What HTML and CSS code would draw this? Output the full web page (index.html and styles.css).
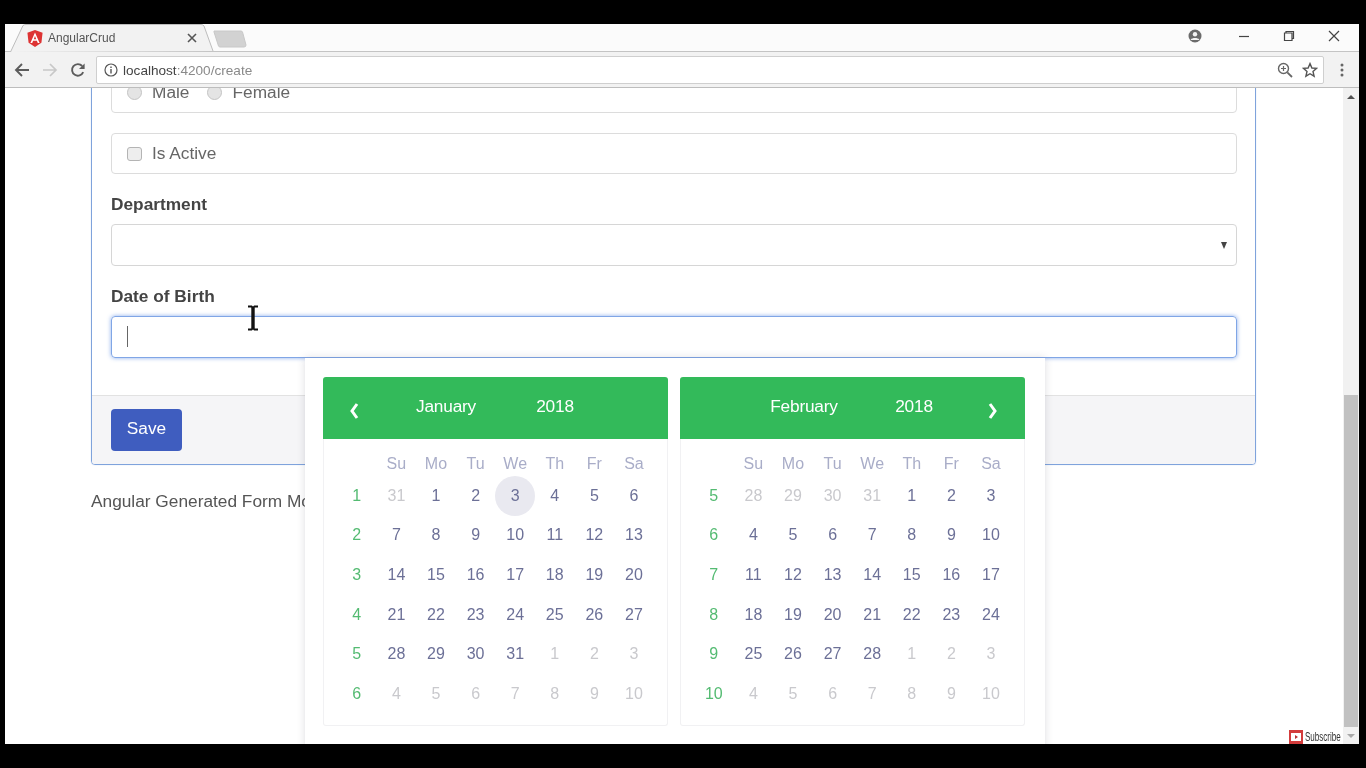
FILE: index.html
```html
<!DOCTYPE html>
<html lang="en">
<head>
  <meta charset="UTF-8" />
  <title>AngularCrud</title>
  <link rel="stylesheet" href="styles.css">
</head>
<body>
  <div class="screen">
    <div class="tabstrip">
      <div class="tab">
        <svg class="tab-shape" width="204" height="28" viewBox="0 0 204 28"><path d="M0.5 28 L13 1.5 Q14 0.5 16 0.5 L191 0.5 Q193 0.5 194 2 L203 27" fill="#f2f2f2" stroke="#bdbdbd"/></svg>
        <svg class="tab-logo" width="16" height="17" viewBox="0 0 16 17"><path d="M8 0 L15.6 2.7 L14.4 12.7 L8 17 L1.6 12.7 L0.4 2.7 Z" fill="#dd3333"/><path d="M8 2.5 L3.4 13 H5.2 L6.1 10.7 H9.9 L10.8 13 H12.6 Z M6.8 9.2 L8 6 L9.2 9.2 Z" fill="#fff" fill-rule="evenodd"/></svg>
        <span class="tab-title">AngularCrud</span>
        <svg class="tab-close" width="10" height="10" viewBox="0 0 10 10"><path d="M1 1 L9 9 M9 1 L1 9" stroke="#555" stroke-width="1.6"/></svg>
      </div>
      <svg class="newtab" width="34" height="18" viewBox="0 0 34 18"><path d="M1 1 H28 Q29 1 29.5 2 L33 15 Q33 17 31 17 H7 Q6 17 5.5 16 L1 2 Z" fill="#d2d2d2" stroke="#c8c8c8" stroke-linejoin="round"/></svg>
      <div class="win-btns">
        <svg class="win-user" width="14" height="14" viewBox="0 0 14 14"><circle cx="7" cy="7" r="6.5" fill="#6b6b6b"/><circle cx="7" cy="5.2" r="2.2" fill="#f4f4f4"/><path d="M2.8 10.6 C4 8.6 10 8.6 11.2 10.6 L11.2 11 H2.8 Z" fill="#f4f4f4"/></svg>
        <span class="win-btn"><svg width="12" height="12" viewBox="0 0 12 12"><path d="M1 6.5 H11" stroke="#444" stroke-width="1.2"/></svg></span>
        <span class="win-btn"><svg width="12" height="12" viewBox="0 0 12 12"><path d="M3 3 V1.5 H10.5 V8.5 H9 M1.5 3 H9 V10.5 H1.5 Z" fill="none" stroke="#444" stroke-width="1.2"/></svg></span>
        <span class="win-btn"><svg width="12" height="12" viewBox="0 0 12 12"><path d="M1 1 L11 11 M11 1 L1 11" stroke="#444" stroke-width="1.2"/></svg></span>
      </div>
    </div>

    <div class="toolbar">
      <span class="tool"><svg width="16" height="16" viewBox="0 0 16 16"><path d="M15 8 H2 M8 2 L2 8 L8 14" fill="none" stroke="#5c5c5c" stroke-width="1.9"/></svg></span>
      <span class="tool"><svg width="16" height="16" viewBox="0 0 16 16"><path d="M1 8 H14 M8 2 L14 8 L8 14" fill="none" stroke="#c8c8c8" stroke-width="1.7"/></svg></span>
      <span class="tool"><svg width="16" height="16" viewBox="0 0 16 16"><path d="M13.2 10.2 A5.8 5.8 0 1 1 12.2 4" fill="none" stroke="#5c5c5c" stroke-width="1.9"/><path d="M14.6 1.4 V7 H9 Z" fill="#5c5c5c"/></svg></span>
      <div class="address">
        <svg class="addr-info" width="14" height="14" viewBox="0 0 14 14"><circle cx="7" cy="7" r="6" fill="none" stroke="#555" stroke-width="1.2"/><path d="M7 6 V10.5 M7 3.4 V5" stroke="#555" stroke-width="1.4"/></svg>
        <span class="url"><span class="url-host">localhost</span>:4200/create</span>
        <svg class="addr-zoom" width="16" height="16" viewBox="0 0 16 16"><circle cx="6.5" cy="6.5" r="5" fill="none" stroke="#666" stroke-width="1.4"/><path d="M10.3 10.3 L15 15" stroke="#666" stroke-width="1.8"/><path d="M4 6.5 H9 M6.5 4 V9" stroke="#666" stroke-width="1.2"/></svg>
        <svg class="addr-star" width="16" height="16" viewBox="0 0 16 16"><path d="M8 1.6 L9.9 6 L14.6 6.4 L11 9.5 L12.1 14.2 L8 11.7 L3.9 14.2 L5 9.5 L1.4 6.4 L6.1 6 Z" fill="none" stroke="#555" stroke-width="1.4"/></svg>
      </div>
      <svg class="kebab" width="4" height="14" viewBox="0 0 4 14"><circle cx="2" cy="2" r="1.5" fill="#666"/><circle cx="2" cy="7" r="1.5" fill="#666"/><circle cx="2" cy="12" r="1.5" fill="#666"/></svg>
    </div>

    <div class="viewport">
      <div class="page">
        <div class="panel">
          <div class="panel-body">
            <div class="box">
              <span class="radio"></span><span class="opt">Male</span>
              <span class="radio"></span><span class="opt">Female</span>
            </div>
            <div class="box">
              <span class="check"></span><span class="opt">Is Active</span>
            </div>
            <label class="field-label">Department</label>
            <div class="select"><span class="caret"></span></div>
            <label class="field-label">Date of Birth</label>
            <div class="input focused"><span class="text-cursor"></span></div>
          </div>
          <div class="panel-footer">
            <button class="btn-save">Save</button>
          </div>
        </div>
        <p class="model-text">Angular Generated Form Model</p>

        <div class="datepicker">
          <div class="month">
            <div class="month-head">
              <svg class="chev" width="10" height="16" viewBox="0 0 10 16"><path d="M8 1 L3 8 L8 15" fill="none" stroke="#fff" stroke-width="3"/></svg>
              <span>January</span><span>2018</span><span></span>
            </div>
            <div class="cal">
              <span></span><span class="wd">Su</span><span class="wd">Mo</span><span class="wd">Tu</span><span class="wd">We</span><span class="wd">Th</span><span class="wd">Fr</span><span class="wd">Sa</span>
              <span class="wk">1</span><span class="off">31</span><span>1</span><span>2</span><span class="today">3</span><span>4</span><span>5</span><span>6</span>
              <span class="wk">2</span><span>7</span><span>8</span><span>9</span><span>10</span><span>11</span><span>12</span><span>13</span>
              <span class="wk">3</span><span>14</span><span>15</span><span>16</span><span>17</span><span>18</span><span>19</span><span>20</span>
              <span class="wk">4</span><span>21</span><span>22</span><span>23</span><span>24</span><span>25</span><span>26</span><span>27</span>
              <span class="wk">5</span><span>28</span><span>29</span><span>30</span><span>31</span><span class="off">1</span><span class="off">2</span><span class="off">3</span>
              <span class="wk">6</span><span class="off">4</span><span class="off">5</span><span class="off">6</span><span class="off">7</span><span class="off">8</span><span class="off">9</span><span class="off">10</span>
            </div>
          </div>
          <div class="month">
            <div class="month-head month-head-right">
              <span></span><span>February</span><span>2018</span>
              <svg class="chev" width="10" height="16" viewBox="0 0 10 16"><path d="M2 1 L7 8 L2 15" fill="none" stroke="#fff" stroke-width="3"/></svg>
            </div>
            <div class="cal">
              <span></span><span class="wd">Su</span><span class="wd">Mo</span><span class="wd">Tu</span><span class="wd">We</span><span class="wd">Th</span><span class="wd">Fr</span><span class="wd">Sa</span>
              <span class="wk">5</span><span class="off">28</span><span class="off">29</span><span class="off">30</span><span class="off">31</span><span>1</span><span>2</span><span>3</span>
              <span class="wk">6</span><span>4</span><span>5</span><span>6</span><span>7</span><span>8</span><span>9</span><span>10</span>
              <span class="wk">7</span><span>11</span><span>12</span><span>13</span><span>14</span><span>15</span><span>16</span><span>17</span>
              <span class="wk">8</span><span>18</span><span>19</span><span>20</span><span>21</span><span>22</span><span>23</span><span>24</span>
              <span class="wk">9</span><span>25</span><span>26</span><span>27</span><span>28</span><span class="off">1</span><span class="off">2</span><span class="off">3</span>
              <span class="wk">10</span><span class="off">4</span><span class="off">5</span><span class="off">6</span><span class="off">7</span><span class="off">8</span><span class="off">9</span><span class="off">10</span>
            </div>
          </div>
        </div>

        <svg class="ibeam" width="12" height="26" viewBox="0 0 12 26"><path d="M1 1.5 H4.5 L6 3 L7.5 1.5 H11 M1 24.5 H4.5 L6 23 L7.5 24.5 H11" fill="none" stroke="#111" stroke-width="2"/><path d="M6 3 V23" stroke="#111" stroke-width="3.4"/></svg>
      </div>

      <div class="scrollbar">
        <span class="arrow-up"></span>
        <span class="thumb"></span>
        <span class="arrow-down"></span>
      </div>

      <div class="subscribe">
        <span class="sub-icon"><span class="sub-play"></span></span>
        <span class="sub-text">Subscribe</span>
      </div>
    </div>
  </div>
</body>
</html>
```

FILE: styles.css
```css
* {
  box-sizing: border-box;
}

html,
body {
  margin: 0;
  height: 768px;
  overflow: hidden;
  background: #000;
  font-family: "Liberation Sans", Arial, sans-serif;
}

/* the reference is a video frame, slightly soft */
.screen {
  width: 1354px;
  height: 720px;
  margin: 24px 0 0 5px;
  background: #fff;
  display: flex;
  flex-direction: column;
  filter: blur(0.4px);
}

/* browser chrome */
.tabstrip {
  height: 28px;
  display: flex;
  align-items: flex-start;
  background: #fbfbfb;
  border-bottom: 1px solid #c4c4c4;
}

.tab {
  position: relative;
  width: 204px;
  height: 28px;
  margin-left: 5px;
  padding: 6px 17px 0 17px;
  display: flex;
  align-items: flex-start;
  flex-shrink: 0;
}

.tab-shape {
  position: absolute;
  left: 0;
  top: 0;
}

.tab-logo {
  position: relative;
  flex-shrink: 0;
}

.tab-title {
  position: relative;
  margin-left: 5px;
  font-size: 12px;
  line-height: 16px;
  color: #555;
  flex: 1;
}

.tab-close {
  position: relative;
  margin-top: 3px;
}

.newtab {
  margin: 6px 0 0 -1px;
}

.win-btns {
  margin-left: auto;
  display: flex;
  align-items: center;
  padding-right: 3px;
  height: 24px;
}

.win-user {
  margin-right: 19px;
}

.win-btn {
  width: 45px;
  display: flex;
  justify-content: center;
}

.toolbar {
  height: 36px;
  padding: 1px 10px 0 3px;
  display: flex;
  align-items: center;
  background: #f2f2f2;
  border-bottom: 1px solid #bdbdbd;
}

.tool {
  width: 28px;
  display: flex;
  justify-content: center;
}

.address {
  width: 1228px;
  height: 28px;
  margin-left: 4px;
  padding: 0 5px 0 7px;
  display: flex;
  align-items: center;
  background: #fff;
  border: 1px solid #cfcfcf;
  border-radius: 2px;
}

.url {
  margin-left: 5px;
  font-size: 13.6px;
  color: #8a8a8a;
}

.url-host {
  color: #444;
}

.addr-zoom {
  margin-left: auto;
}

.addr-star {
  margin-left: 9px;
}

.kebab {
  margin-left: 16px;
}

/* page area */
.viewport {
  position: relative;
  flex: 1;
  display: flex;
  overflow: hidden;
}

.page {
  position: relative;
  flex: 1;
  overflow: hidden;
  padding: 0 87px 0 86px;
  background: #fff;
  color: #555;
}

.panel {
  margin-top: -37px;
  border: 1px solid #7fa3dc;
  border-radius: 4px;
  box-shadow: 0 0 1px rgba(110, 150, 220, 0.6);
}

.panel-body {
  padding: 20px 18px 37px 19px;
}

.box {
  height: 41px;
  margin-bottom: 20px;
  padding: 0 15px;
  display: flex;
  align-items: center;
  border: 1px solid #dcdcdc;
  border-radius: 4px;
}

.radio {
  width: 15px;
  height: 15px;
  border-radius: 50%;
  background: #e4e4e4;
  border: 1px solid #c4c4c4;
}

.check {
  width: 15px;
  height: 14px;
  border-radius: 3px;
  background: #eee;
  border: 1px solid #b4b4b4;
}

.opt {
  margin: 0 18px 0 10px;
  font-size: 17.3px;
  color: #666;
}

.field-label {
  display: block;
  height: 20px;
  margin-bottom: 10px;
  font-size: 17.3px;
  line-height: 20px;
  font-weight: bold;
  color: #444;
}

.select {
  position: relative;
  height: 42px;
  margin-bottom: 20px;
  border: 1px solid #d6d6d6;
  border-radius: 4px;
}

.caret {
  position: absolute;
  right: 9px;
  top: 17px;
  border-left: 3.5px solid transparent;
  border-right: 3.5px solid transparent;
  border-top: 7px solid #444;
}

.input {
  height: 42px;
  padding: 9px 15px;
  border: 1px solid #d6d6d6;
  border-radius: 4px;
}

.input.focused {
  border-color: #80a6e6;
  box-shadow: 0 0 4px rgba(90, 140, 230, 0.7);
}

.text-cursor {
  display: block;
  width: 1px;
  height: 21px;
  background: #666;
}

.panel-footer {
  height: 69px;
  padding: 13px 19px;
  background: #f5f5f7;
  border-top: 1px solid #e2e2e2;
  border-radius: 0 0 3px 3px;
}

.btn-save {
  width: 71px;
  height: 42px;
  padding: 0 0 3px;
  background: #3f5dbf;
  border: none;
  border-radius: 4px;
  color: #fff;
  font-family: inherit;
  font-size: 17.3px;
}

.model-text {
  margin: 25px 0 0;
  font-size: 17.3px;
  line-height: 22px;
  color: #555;
}

/* date picker popup */
.datepicker {
  position: absolute;
  left: 300px;
  top: 270px;
  width: 740px;
  height: 430px;
  padding: 19px 18px;
  display: flex;
  gap: 12px;
  background: #fff;
  box-shadow: 0 0 8px rgba(60, 60, 90, 0.18);
}

.month {
  width: 345px;
  height: 349px;
  border: 1px solid #f1f1f3;
  border-top: none;
  border-radius: 3px;
}

.month-head {
  height: 62px;
  padding-bottom: 3px;
  margin: 0 -1px;
  display: grid;
  grid-template-columns: 62px 122px 96px 65px;
  align-items: center;
  justify-items: center;
  background: #33ba5a;
  border-radius: 3px 3px 0 0;
  color: #fff;
  font-size: 17.3px;
  letter-spacing: -0.2px;
}

.month-head-right {
  grid-template-columns: 62px 124px 96px 63px;
}

.month-head-right .chev {
  margin-right: 2px;
}

.chev {
  margin-top: 8px;
}

.cal {
  display: grid;
  grid-template-columns: repeat(8, 39.6px);
  grid-template-rows: 24px repeat(6, 39.6px);
  padding: 13px 0 0 13px;
  justify-items: center;
  align-items: center;
  font-size: 16px;
  color: #6c7097;
}

.cal .wd {
  color: #a9adc8;
}

.cal .wk {
  color: #54bb72;
}

.cal .off {
  color: #c9c9cd;
}

.cal .today {
  width: 40px;
  height: 40px;
  display: flex;
  align-items: center;
  justify-content: center;
  border-radius: 50%;
  background: #e9e9f0;
}

.ibeam {
  position: absolute;
  left: 242px;
  top: 217px;
}

/* scrollbar */
.scrollbar {
  width: 16px;
  display: flex;
  flex-direction: column;
  align-items: center;
  background: #f1f1f1;
}

.arrow-up {
  margin-top: 7px;
  border-left: 4px solid transparent;
  border-right: 4px solid transparent;
  border-bottom: 4px solid #505050;
}

.thumb {
  width: 14px;
  height: 332px;
  margin-top: 296px;
  background: #c1c1c1;
}

.arrow-down {
  margin-top: 7px;
  border-left: 4px solid transparent;
  border-right: 4px solid transparent;
  border-top: 4px solid #a8a8a8;
}

/* channel watermark */
.subscribe {
  position: absolute;
  left: 1284px;
  top: 642px;
  width: 53px;
  height: 14px;
  display: flex;
  align-items: center;
  background: #fff;
}

.sub-icon {
  width: 14px;
  height: 14px;
  display: flex;
  align-items: center;
  justify-content: center;
  background: #d33c3c;
  flex-shrink: 0;
}

.sub-play {
  width: 10px;
  height: 8px;
  display: flex;
  align-items: center;
  justify-content: center;
  background: #fff;
}

.sub-play::after {
  content: "";
  border-left: 3px solid #b33;
  border-top: 2px solid transparent;
  border-bottom: 2px solid transparent;
}

.sub-text {
  margin-left: 2px;
  font-size: 12px;
  line-height: 14px;
  color: #333;
  white-space: nowrap;
  transform: scaleX(0.67);
  transform-origin: left center;
}
```
